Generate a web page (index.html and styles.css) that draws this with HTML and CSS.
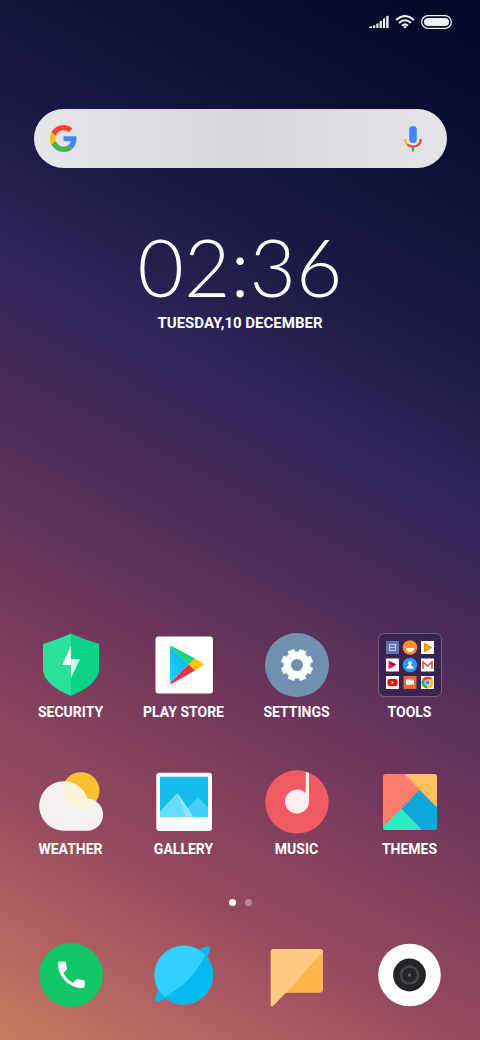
FILE: index.html
```
<!DOCTYPE html>
<html lang="en">
	<head>
		<meta charset="UTF-8" />
		<meta name="viewport" content="width=device-width, initial-scale=1.0" />
		<title>Home</title>
		<link rel="stylesheet" href="styles.css">
	</head>
	<body>
		<div class="phone">
			<header class="status-bar">
				<svg width="20" height="14" viewBox="0 0 20 14" fill="#eef0f5" aria-label="Signal">
					<path d="M0 13V12L3 11V13ZM4 10.800L6.200 10V13H4ZM7.300 9L9.500 8V13H7.300ZM10.600 6.500L12.800 5.500V13H10.600ZM13.900 4L16.100 3V13H13.900ZM17.200 1.500L19.600 .5V13H17.200Z" />
				</svg>
				<svg width="20" height="14" viewBox="0 0 20 14" fill="none" stroke="#eef0f5" stroke-width="2" aria-label="Wi-Fi">
					<path d="M1 5Q10 -3 19 5M4 8Q10 2.500 16 8M7 10.700Q10 8 13 10.700" />
					<path d="M8.200 11.800Q10 10.200 11.800 11.800L10 13.500Z" fill="#eef0f5" stroke="none" />
				</svg>
				<svg width="31" height="14" viewBox="0 0 31 14" aria-label="Battery">
					<rect x=".7" y=".7" width="29.600" height="12.600" rx="6.300" fill="none" stroke="#eef0f5" stroke-width="1.300" />
					<rect x="3" y="3" width="25" height="8" rx="4" fill="#eef0f5" />
				</svg>
			</header>

			<form class="search">
				<svg class="google" viewBox="0 0 48 48" aria-hidden="true">
					<path fill="#ff3f35" d="M24 9.500c3.540 0 6.710 1.220 9.210 3.600l6.850-6.850C35.900 2.380 30.470 0 24 0 14.620 0 6.510 5.380 2.560 13.220l7.980 6.190C12.430 13.720 17.740 9.500 24 9.500z" />
					<path fill="#4285f4" d="M46.980 24.550c0-1.570-.15-3.090-.38-4.550H24v9.020h12.940c-.58 2.960-2.260 5.480-4.780 7.180l7.730 6c4.510-4.180 7.090-10.360 7.090-17.650z" />
					<path fill="#fbbc05" d="M10.530 28.590c-.48-1.450-.76-2.990-.76-4.590s.27-3.140.76-4.590l-7.980-6.190C.92 16.460 0 20.120 0 24s.92 7.540 2.560 10.780l7.970-6.190z" />
					<path fill="#4caf50" d="M24 48c6.480 0 11.930-2.130 15.890-5.810l-7.730-6c-2.150 1.450-4.920 2.300-8.160 2.300-6.260 0-11.570-4.220-13.470-9.910l-7.980 6.190C6.510 42.620 14.620 48 24 48z" />
				</svg>
				<input type="search" class="search-input" aria-label="Search" />
				<button type="button" class="mic" aria-label="Voice search">
					<svg width="18" height="26" viewBox="0 0 18 26" fill="none" stroke-width="2.200">
						<rect x="5.200" y="0" width="7.600" height="17" rx="3.800" fill="#4285f4" />
						<path d="M1.200 13Q1.200 17 3.800 19" stroke="#fbbc05" />
						<path d="M3.500 18.700Q6 20.700 9 20.700Q16.500 20.300 16.800 13" stroke="#f44336" />
						<path d="M9 21.500V25.500" stroke="#34a853" />
					</svg>
				</button>
			</form>

			<section class="clock">
				<time class="time">02:36</time>
				<p class="date">TUESDAY,10 DECEMBER</p>
			</section>

			<nav class="apps" aria-label="Apps">
				<a href="#" class="app">
					<svg class="icon" viewBox="0 0 64 64">
						<path d="M32 .5Q46 7 60 11V36C60 48 46 57 32 63Z" fill="#08d286" />
						<path d="M32 .5Q18 7 4 11V36C4 48 18 57 32 63Z" fill="#2be09a" />
						<path d="M32 13L23 32H32Z" fill="#fff" />
						<path d="M32 26H41L32 45Z" fill="#cef8e7" />
					</svg>
					<span class="label">SECURITY</span>
				</a>
				<a href="#" class="app">
					<svg class="icon" viewBox="0 0 64 64">
						<defs>
							<linearGradient id="play-blue" x1="1" y1="0" x2="0" y2="1">
								<stop offset="0" stop-color="#10a6f0" />
								<stop offset="1" stop-color="#12dcff" />
							</linearGradient>
						</defs>
						<rect x="3.500" y="3.500" width="57.500" height="57" rx="3" fill="#fff" />
						<path d="M18 14V50L36.500 31.500Z" fill="url(#play-blue)" />
						<path d="M18 14Q18.500 12.500 20 13.200L43 25.500L36.500 31.500Z" fill="#13d873" />
						<path d="M43 25.500L51 30.500Q52 31.500 51 32.500L43 37.500L36.500 31.500Z" fill="#ffc400" />
						<path d="M18 50Q19 51.500 20.500 50.300L43 37.500L36.500 31.500Z" fill="#e9314b" />
					</svg>
					<span class="label">PLAY STORE</span>
				</a>
				<a href="#" class="app">
					<svg class="icon" viewBox="0 0 64 64">
						<circle cx="32" cy="32" r="32" fill="#7092b1" />
						<g stroke="#fff" stroke-width="7">
							<path d="M32 16V48" transform="rotate(22.500 32 32)" />
							<path d="M32 16V48" transform="rotate(67.500 32 32)" />
							<path d="M32 16V48" transform="rotate(112.500 32 32)" />
							<path d="M32 16V48" transform="rotate(157.500 32 32)" />
						</g>
						<circle cx="32" cy="32" r="13.500" fill="#fff" />
						<circle cx="32" cy="32" r="6" fill="#7092b1" />
					</svg>
					<span class="label">SETTINGS</span>
				</a>
				<a href="#" class="app">
					<svg class="icon" viewBox="0 0 64 64">
						<rect x=".5" y=".5" width="63" height="63" rx="6" fill="#31204b" fill-opacity=".7" stroke="#fff" stroke-opacity=".25" />
						<rect x="8" y="8" width="13" height="13" fill="#6273ad" />
						<path d="M11.500 11.500H17.500M11.500 14.500H17.500M11.500 17.500H17.500M11.500 11V18M17.500 11V18" stroke="#c5cdeb" fill="none" />
						<circle cx="32" cy="14.500" r="7.300" fill="#fb8c2e" />
						<path d="M28 15H36Q36 19 32 19Q28 19 28 15Z" fill="#fff" />
						<rect x="43" y="8" width="13" height="13" fill="#fff" />
						<path d="M46 9.500L54.500 14.500L46 19.500Z" fill="#ff9800" />
						<circle cx="49" cy="15" r="2.300" fill="#ffcb2e" stroke="#f4672a" />
						<rect x="8" y="25.500" width="13" height="13" fill="#fff" />
						<path d="M10.500 27.500L18.500 31.500L10.500 36.500Z" fill="#e91e63" />
						<path d="M11 28L18.500 31.500L14 33.500Z" fill="#a81342" />
						<circle cx="32" cy="32" r="7.300" fill="#2f95f4" />
						<circle cx="32" cy="29.800" r="1.900" fill="#fff" />
						<path d="M31 31H33L33.500 33L35.500 34V35.500H28.500V34L30.500 33Z" fill="#fff" />
						<rect x="43" y="25.500" width="13" height="13" fill="#fff" />
						<path d="M45 36V29L49.500 33L54 29V36" fill="none" stroke="#df4b3f" stroke-width="1.500" />
						<rect x="8" y="43" width="13" height="13" fill="#fff" />
						<rect x="9.500" y="46" width="10" height="7" rx="2" fill="#f00" />
						<path d="M13.500 48V51L16 49.500Z" fill="#fff" />
						<rect x="25.500" y="43" width="13" height="13" fill="#e76835" />
						<path d="M28 46.500H33.500V48L36 46.500V52L33.500 50.500V52H28Z" fill="#fff" />
						<rect x="43" y="43" width="13" height="13" fill="#fff" />
						<path d="M49.500 49.500L44.300 46.500A6 6 0 0 1 54.700 46.500H49.500Z" fill="#ea4335" />
						<path d="M49.500 49.500L44.300 46.500A6 6 0 0 0 49 55.500Z" fill="#34a853" />
						<path d="M49.500 49.500V46.500H54.700A6 6 0 0 1 49 55.500Z" fill="#fbc116" />
						<circle cx="49.500" cy="49.500" r="2.600" fill="#4285f4" stroke="#fff" stroke-width=".8" />
					</svg>
					<span class="label">TOOLS</span>
				</a>
				<a href="#" class="app">
					<svg class="icon" viewBox="0 0 64 64">
						<defs>
							<clipPath id="cloud-clip">
								<path d="M25.500 60.700A24.700 24.700 0 1 1 48.500 28.700A16 16 0 0 1 47.700 60.700Z" />
							</clipPath>
						</defs>
						<circle cx="42" cy="20.700" r="18.500" fill="#fbc02f" />
						<path d="M25.500 60.700A24.700 24.700 0 1 1 48.500 28.700A16 16 0 0 1 47.700 60.700Z" fill="#f5f0f3" />
						<circle cx="42" cy="20.700" r="18.500" fill="#fdf2da" clip-path="url(#cloud-clip)" />
					</svg>
					<span class="label">WEATHER</span>
				</a>
				<a href="#" class="app">
					<svg class="icon" viewBox="0 0 64 64">
						<rect x="4.300" y="2.700" width="55.700" height="58.300" rx="3" fill="#fff" />
						<path d="M8 6.700H56V47H8Z" fill="#17bdea" />
						<path d="M34.500 39L45.700 27.300L56 37.500V47H30Z" fill="#43cff4" />
						<path d="M8 41.500L25.300 22.700L41.500 47H8Z" fill="#67dcfa" />
						<path d="M25.300 22.700L41.500 47H34Z" fill="#8ee7fd" />
					</svg>
					<span class="label">GALLERY</span>
				</a>
				<a href="#" class="app">
					<svg class="icon" viewBox="0 0 64 64">
						<circle cx="32" cy="32" r="31.700" fill="#f05a62" />
						<path d="M40.700 2V24H44V2.800Z" fill="#fdedf0" />
						<path d="M40.700 20V23.300A12 12 0 1 0 44 32V20Z" fill="#fdedf0" />
					</svg>
					<span class="label">MUSIC</span>
				</a>
				<a href="#" class="app">
					<svg class="icon" viewBox="0 0 64 64">
						<defs>
							<clipPath id="themes-clip">
								<rect x="5" y="4" width="54" height="56" rx="3" />
							</clipPath>
						</defs>
						<g clip-path="url(#themes-clip)">
							<path d="M5 4H59V60H5Z" fill="#ff7d6c" />
							<path d="M25.500 3H59V37Z" fill="#ffc160" />
							<path d="M41.300 20.300L60 38.500V60H43.700L23.300 38.700Z" fill="#0da7d9" />
							<path d="M23.300 38.700L44 60H2Z" fill="#29ecc3" />
						</g>
					</svg>
					<span class="label">THEMES</span>
				</a>
			</nav>

			<div class="pages">
				<span class="page active"></span>
				<span class="page"></span>
			</div>

			<nav class="dock" aria-label="Dock">
				<a href="#" class="app" aria-label="Phone">
					<svg class="icon" viewBox="0 0 64 64">
						<circle cx="32" cy="32" r="32" fill="#13c569" />
						<path transform="translate(14.500 14) scale(1.480)" d="M6.620 10.790c1.440 2.830 3.760 5.140 6.590 6.590l2.200-2.200c.27-.27.67-.36 1.020-.24 1.120.37 2.330.57 3.570.57.550 0 1 .45 1 1V20c0 .55-.45 1-1 1-9.390 0-17-7.610-17-17 0-.55.450-1 1-1h3.500c.55 0 1 .45 1 1 0 1.250.2 2.450.57 3.570.11.350.03.740-.25 1.020l-2.200 2.200z" fill="#fff" />
					</svg>
				</a>
				<a href="#" class="app" aria-label="Browser">
					<svg class="icon" viewBox="0 0 64 64">
						<defs>
							<clipPath id="planet-clip">
								<circle cx="31.700" cy="32" r="29.400" />
							</clipPath>
						</defs>
						<ellipse cx="30.500" cy="31" rx="38" ry="8.500" transform="rotate(-45 30.500 31)" fill="#05b9ee" />
						<circle cx="31.700" cy="32" r="29.400" fill="#31d1ff" />
						<path d="M54 10Q47 26 36 37Q25 48 9 56V64H64V10Z" fill="#05b9ee" clip-path="url(#planet-clip)" />
					</svg>
				</a>
				<a href="#" class="app" aria-label="Messages">
					<svg class="icon" viewBox="0 0 64 64">
						<path d="M54 6.500Q58 6.500 58 10V46Q58 49.700 54.500 49.700H18L54 6.500Z" fill="#ffb54a" />
						<path d="M8.700 6H55Q58 6 58 8.500L21 49.700L8 63Q5.700 64.500 5.700 61V9Q5.700 6 8.700 6Z" fill="#ffcb80" />
					</svg>
				</a>
				<a href="#" class="app" aria-label="Camera">
					<svg class="icon" viewBox="0 0 64 64">
						<circle cx="31.500" cy="32" r="31.300" fill="#fff" />
						<circle cx="31.500" cy="32" r="16.400" fill="#222426" />
						<circle cx="31.500" cy="32" r="8.500" fill="none" stroke="#45474a" stroke-width="2.600" />
						<circle cx="31.500" cy="32" r="1.800" fill="#606264" />
					</svg>
				</a>
			</nav>
		</div>
	</body>
</html>
```
FILE: styles.css
```
* {
	box-sizing: border-box;
}
body {
	margin: 0;
	font-family: Roboto, 'Liberation Sans', sans-serif;
	color: #fff;
	background-color: #31255a;
}
.phone {
	display: flex;
	flex-direction: column;
	min-height: 100vh;
	padding-bottom: 33px;
	background: linear-gradient(28deg, #c97b5f 0%, #ad5d60 11%, #94495f 20%, #70375a 36%, #4e2c59 48%, #31255a 60%, #27204f 66%, #1c1a46 72%, #12143c 80%, #090e30 90%, #030826 100%);
}
.status-bar {
	display: flex;
	justify-content: flex-end;
	align-items: center;
	gap: 6px;
	height: 44px;
	padding-right: 28px;
}
.search {
	display: flex;
	align-items: center;
	height: 59px;
	margin: 65px 33px 0 34px;
	padding: 0 16px;
	border-radius: 30px;
	background: linear-gradient(90deg, #e6e5e9, #d6d7dc 50%, #e4e4e8);
}
.google {
	width: 27px;
	height: 27px;
}
.search-input {
	flex: 1;
	min-width: 0;
	height: 40px;
	padding: 0 12px;
	border: 0;
	outline: 0;
	background: transparent;
	font-size: 16px;
}
.mic {
	display: flex;
	justify-content: center;
	width: 36px;
	padding: 0;
	border: 0;
	background: transparent;
	cursor: pointer;
}
.clock {
	margin-top: 50px;
	text-align: center;
}
.time {
	display: block;
	font-family: Lato, sans-serif;
	font-size: 80px;
	font-weight: 300;
	line-height: 96px;
}
.date {
	margin: 0;
	font-size: 15px;
	font-weight: 700;
	line-height: 18px;
}
.apps {
	display: grid;
	grid-template-columns: repeat(4, 1fr);
	row-gap: 49px;
	margin-top: auto;
	padding: 0 14px;
}
.app {
	display: flex;
	flex-direction: column;
	align-items: center;
	gap: 6px;
	color: #fff;
	text-decoration: none;
}
.icon {
	width: 64px;
	height: 64px;
}
.label {
	font-size: 14px;
	font-weight: 700;
	line-height: 18px;
	white-space: nowrap;
}
.pages {
	display: flex;
	justify-content: center;
	gap: 9px;
	margin: 41px 0 37px;
}
.page {
	width: 7px;
	height: 7px;
	border-radius: 50%;
	background-color: rgba(255, 255, 255, 0.35);
}
.page.active {
	background-color: #fff;
}
.dock {
	display: grid;
	grid-template-columns: repeat(4, 1fr);
	padding: 0 14px;
}
```
